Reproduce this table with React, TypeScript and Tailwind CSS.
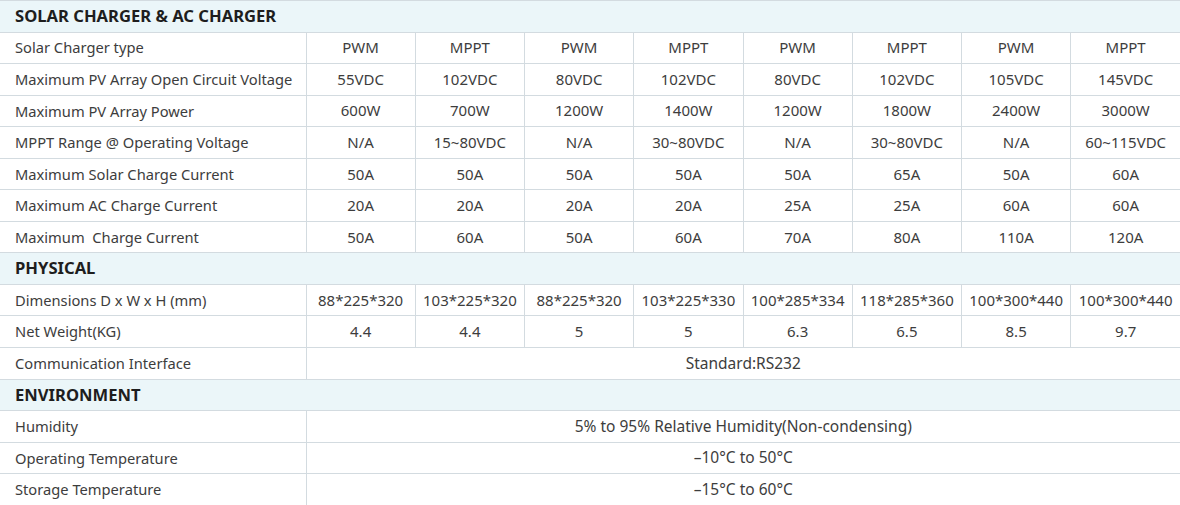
import React from 'react';

type Row = { label: string; values?: string[]; span?: string };
type Section = { title: string; rows: Row[] };

const sections: Section[] = [
  {
    title: 'SOLAR CHARGER & AC CHARGER',
    rows: [
      { label: 'Solar Charger type', values: ['PWM', 'MPPT', 'PWM', 'MPPT', 'PWM', 'MPPT', 'PWM', 'MPPT'] },
      { label: 'Maximum PV Array Open Circuit Voltage', values: ['55VDC', '102VDC', '80VDC', '102VDC', '80VDC', '102VDC', '105VDC', '145VDC'] },
      { label: 'Maximum PV Array Power', values: ['600W', '700W', '1200W', '1400W', '1200W', '1800W', '2400W', '3000W'] },
      { label: 'MPPT Range @ Operating Voltage', values: ['N/A', '15~80VDC', 'N/A', '30~80VDC', 'N/A', '30~80VDC', 'N/A', '60~115VDC'] },
      { label: 'Maximum Solar Charge Current', values: ['50A', '50A', '50A', '50A', '50A', '65A', '50A', '60A'] },
      { label: 'Maximum AC Charge Current', values: ['20A', '20A', '20A', '20A', '25A', '25A', '60A', '60A'] },
      { label: 'Maximum  Charge Current', values: ['50A', '60A', '50A', '60A', '70A', '80A', '110A', '120A'] },
    ],
  },
  {
    title: 'PHYSICAL',
    rows: [
      { label: 'Dimensions D x W x H (mm)', values: ['88*225*320', '103*225*320', '88*225*320', '103*225*330', '100*285*334', '118*285*360', '100*300*440', '100*300*440'] },
      { label: 'Net Weight(KG)', values: ['4.4', '4.4', '5', '5', '6.3', '6.5', '8.5', '9.7'] },
      { label: 'Communication Interface', span: 'Standard:RS232' },
    ],
  },
  {
    title: 'ENVIRONMENT',
    rows: [
      { label: 'Humidity', span: '5% to 95% Relative Humidity(Non-condensing)' },
      { label: 'Operating Temperature', span: '–10°C to 50°C' },
      { label: 'Storage Temperature', span: '–15°C to 60°C' },
    ],
  },
];

export default function App() {
  return (
    <div className="w-[1180px] h-[505px] bg-white overflow-hidden" style={{ fontFamily: '"Noto Sans", "Liberation Sans", sans-serif' }}>
      <table className="w-[1180px] table-fixed border-collapse text-[14.7px] text-[#3d3d3d]">
        <colgroup>
          <col className="w-[306px]" />
          {Array.from({ length: 8 }).map((_, i) => (
            <col key={i} className="w-[109.25px]" />
          ))}
        </colgroup>
        <tbody>
          {sections.map((s) => (
            <React.Fragment key={s.title}>
              <tr className="h-[31.55px] bg-[#ebf6f9]">
                <td colSpan={9} className="border-y border-[#d3dbe0] pl-[15px] text-[16.6px] font-bold text-[#1e1e1e] leading-none">
                  {s.title}
                </td>
              </tr>
              {s.rows.map((r) => (
                <tr key={r.label} className="h-[31.55px]">
                  <td className="border-y border-r border-[#d3dbe0] pl-[15px] whitespace-pre leading-none">{r.label}</td>
                  {r.values ? (
                    r.values.map((v, i) => (
                      <td key={i} className="border border-r-0 border-[#d3dbe0] text-center text-[15px] leading-none whitespace-nowrap">
                        {v}
                      </td>
                    ))
                  ) : (
                    <td colSpan={8} className="border-y border-[#d3dbe0] text-center text-[15.5px] leading-none">
                      {r.span}
                    </td>
                  )}
                </tr>
              ))}
            </React.Fragment>
          ))}
        </tbody>
      </table>
    </div>
  );
}
